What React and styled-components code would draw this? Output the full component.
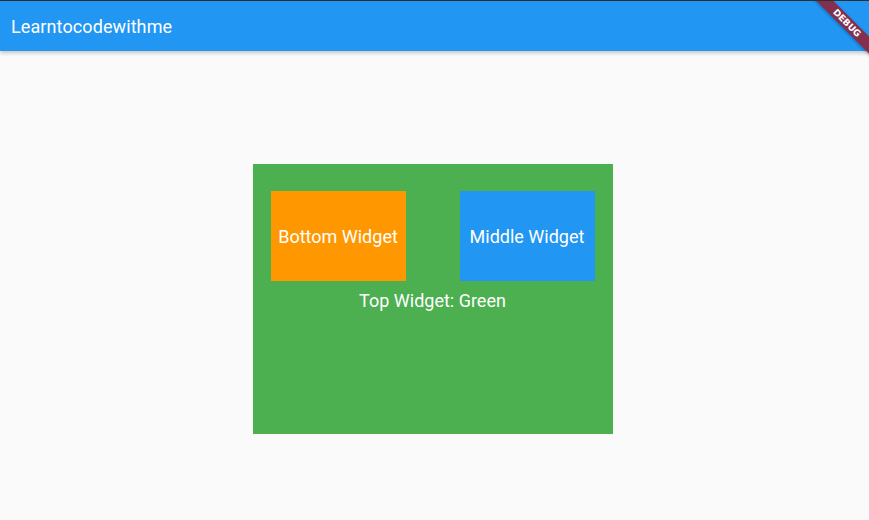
import styled, { createGlobalStyle } from 'styled-components';

const GlobalStyle = createGlobalStyle`
  html, body {
    margin: 0;
    padding: 0;
    background: #fafafa;
    font-family: Roboto, "Noto Sans", sans-serif;
  }
`;

function App() {
  return (
    <Page>
      <GlobalStyle />
      <AppBar>
        <Title>Learntocodewithme</Title>
        <BannerClip>
          <Ribbon>DEBUG</Ribbon>
        </BannerClip>
      </AppBar>
      <Body>
        <GreenBox>
          <Row>
            <Tile color="#ff9800">Bottom Widget</Tile>
            <Tile color="#2196f3">Middle Widget</Tile>
          </Row>
          <Caption>Top Widget: Green</Caption>
        </GreenBox>
      </Body>
    </Page>
  );
}

const Page = styled.div`
  width: 869px;
  height: 520px;
  display: flex;
  flex-direction: column;
  overflow: hidden;
  background: #fafafa;
`;

const AppBar = styled.header`
  position: relative;
  height: 50px;
  flex-shrink: 0;
  display: flex;
  align-items: center;
  padding: 0 11px;
  background: #2196f3;
  border-top: 1px solid #2b2f33;
  box-shadow: 0 2px 4px rgba(0, 0, 0, 0.22);
  z-index: 1;
`;

const Title = styled.h1`
  margin: 0;
  color: #fff;
  font-size: 18px;
  font-weight: 400;
  letter-spacing: 0.1px;
`;

const BannerClip = styled.div`
  position: absolute;
  top: 0;
  right: 0;
  width: 60px;
  height: 60px;
  overflow: hidden;
`;

const Ribbon = styled.div`
  position: absolute;
  left: -22px;
  top: 16px;
  width: 120px;
  height: 12px;
  transform: rotate(45deg);
  background: #83304f;
  color: #fff;
  font-family: "DejaVu Sans", Roboto, sans-serif;
  font-size: 9px;
  font-weight: 700;
  line-height: 12px;
  text-align: center;
  box-shadow: 0 1px 3px rgba(0, 0, 0, 0.3);
`;

const Body = styled.main`
  flex: 1;
  display: flex;
  justify-content: center;
  align-items: flex-start;
  padding: 113px 4px 0 0;
`;

const GreenBox = styled.section`
  width: 360px;
  height: 270px;
  box-sizing: border-box;
  padding: 27px 18px 0;
  background: #4caf50;
  display: flex;
  flex-direction: column;
`;

const Row = styled.div`
  display: flex;
  justify-content: space-between;
`;

const Tile = styled.div`
  width: 135px;
  height: 90px;
  display: flex;
  align-items: center;
  justify-content: center;
  background: ${(p) => p.color};
  color: #fff;
  font-size: 18px;
`;

const Caption = styled.div`
  margin-top: 9px;
  text-align: center;
  color: #fff;
  font-size: 18px;
  line-height: 22px;
`;

export default App;
